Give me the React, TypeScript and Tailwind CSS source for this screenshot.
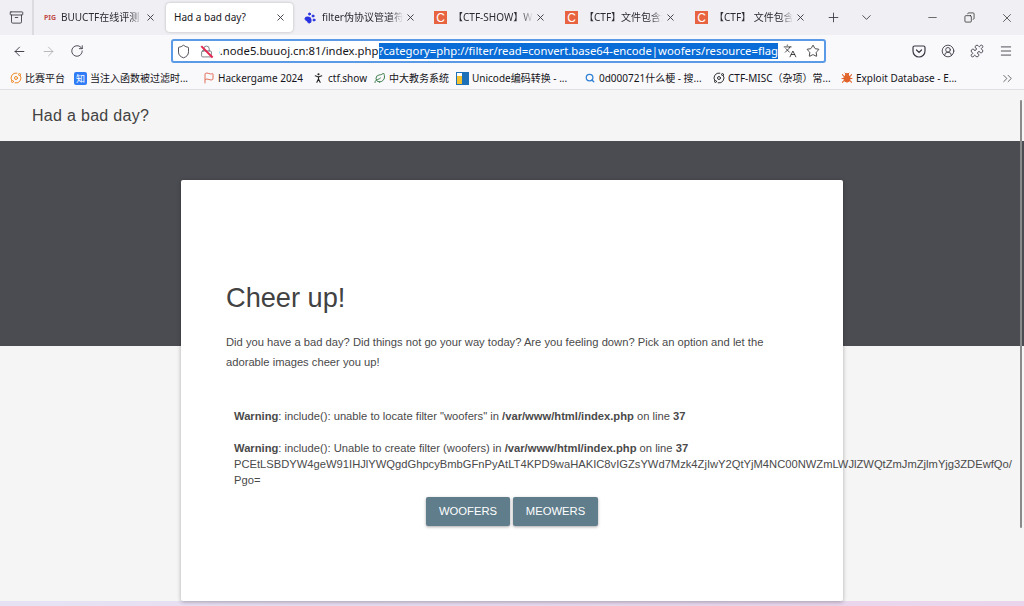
import React from "react";
import {
  ArrowLeft,
  ArrowRight,
  RotateCw,
  X,
  Plus,
  ChevronDown,
  Minus,
  Shield,
  Lock,
  Languages,
  Star,
  CircleUserRound,
  Puzzle,
  Menu,
  ChevronsRight,
  Search,
  PawPrint,
  Archive,
  Copy,
  Flag,
  PersonStanding,
  Leaf,
  Orbit,
  Bug,
} from "lucide-react";

const chromeFont = "font-['Noto_Sans','Noto_Sans_CJK_SC',sans-serif]";

const CFav = () => (
  <span className="flex h-[13px] w-[13px] shrink-0 items-center justify-center bg-[#e8633f] font-['Liberation_Sans',sans-serif] text-[12px] leading-none text-white">
    C
  </span>
);

const tabs = [
  {
    title: "BUUCTF在线评测",
    width: "w-[131px]",
    pad: "pl-[10px]",
    icon: <span className="w-[11px] shrink-0 text-[7px] font-bold leading-none text-[#c0504d]">PIG</span>,
  },
  {
    title: "filter伪协议管道符仪",
    width: "w-[128.5px]",
    pad: "pl-[8px]",
    icon: <PawPrint size={12} className="shrink-0 fill-[#2932e1] text-[#2932e1]" />,
  },
  { title: "【CTF-SHOW】WEB入门", width: "w-[130px]", pad: "pl-[9.5px]", icon: <CFav /> },
  { title: "【CTF】文件包含漏洞", width: "w-[130px]", pad: "pl-[10.5px]", icon: <CFav /> },
  { title: "【CTF】 文件包含漏洞", width: "w-[130px]", pad: "pl-[10.5px]", icon: <CFav /> },
];

const Tab = ({ tab }: { tab: (typeof tabs)[number] }) => (
  <div className={`flex h-[29px] shrink-0 items-center ${tab.width} ${tab.pad}`}>
    {tab.icon}
    <span className="ml-[6px] min-w-0 flex-1 overflow-hidden whitespace-nowrap text-[10px] text-[#2b2a33] [mask-image:linear-gradient(to_right,black_85%,transparent)]">
      {tab.title}
    </span>
    <X size={11} className="ml-[2px] mr-[9px] shrink-0 text-[#3a3944]" />
  </div>
);

const bookmarks = [
  {
    label: "比赛平台",
    width: "w-[65px]",
    icon: <Orbit size={12} className="text-[#f08a24]" />,
  },
  {
    label: "当注入函数被过滤时...",
    width: "w-[128px]",
    icon: (
      <span className="flex h-[13px] w-[13px] items-center justify-center rounded-[2px] bg-[#2f7cf6] text-[9px] leading-none text-white">
        知
      </span>
    ),
  },
  {
    label: "Hackergame 2024",
    width: "w-[110px]",
    icon: <Flag size={12} className="text-[#e2725b]" />,
  },
  {
    label: "ctf.show",
    width: "w-[61px]",
    icon: <PersonStanding size={14} className="text-[#222]" />,
  },
  {
    label: "中大教务系统",
    width: "w-[83px]",
    icon: <Leaf size={12} className="text-[#3f7f4f]" />,
  },
  {
    label: "Unicode编码转换 - ...",
    width: "w-[127px]",
    icon: (
      <span className="flex h-[13px] w-[13px] items-end border border-[#1d6fb8] bg-white">
        <span className="h-[8px] w-[5px] bg-[#f2c230]" />
        <span className="h-[11px] w-[6px] bg-[#1d6fb8]" />
      </span>
    ),
  },
  {
    label: "0d000721什么梗 - 搜...",
    width: "w-[129px]",
    icon: <Search size={10} strokeWidth={3} className="text-[#2e7fd6]" />,
  },
  {
    label: "CTF-MISC（杂项）常...",
    width: "w-[128px]",
    icon: <Orbit size={12} className="text-[#333]" />,
  },
  {
    label: "Exploit Database - E...",
    width: "w-[125px]",
    icon: <Bug size={12} className="fill-[#e2632a] text-[#e2632a]" />,
  },
];

export default function App() {
  return (
    <div className={`flex h-[606px] w-[1024px] flex-col overflow-hidden bg-[#f5f5f5] ${chromeFont}`}>
      {/* tab strip */}
      <div className="flex h-[35px] shrink-0 items-center bg-[#f0f0f4]">
        <div className="flex h-full w-[34px] shrink-0 items-center justify-center border-r-2 border-[#dcdce0]">
          <Archive size={15} strokeWidth={1.4} className="text-[#3a3944]" />
        </div>
        <Tab tab={tabs[0]} />
        <div className="ml-[1px] mr-[3px] flex h-[29px] w-[127px] shrink-0 items-center rounded-[4px] bg-white pl-[8px] shadow-[0_0_3px_rgba(0,0,0,0.25)]">
          <span className="flex-1 text-[10px] text-[#15141a]">Had a bad day?</span>
          <X size={11} className="mr-[7.5px] text-[#3a3944]" />
        </div>
        {tabs.slice(1).map((t) => (
          <Tab key={t.title} tab={t} />
        ))}
        <Plus size={15} strokeWidth={1.4} className="ml-[11px] shrink-0 text-[#3a3944]" />
        <ChevronDown size={15} strokeWidth={1.4} className="ml-[18px] shrink-0 text-[#3a3944]" />
        <Minus size={13} strokeWidth={1.2} className="ml-[52px] shrink-0 text-[#222]" />
        <Copy size={11} strokeWidth={1.6} className="ml-[25px] shrink-0 -scale-x-100 text-[#222]" />
        <X size={14} strokeWidth={1.2} className="ml-[25px] shrink-0 text-[#222]" />
      </div>

      {/* nav toolbar */}
      <div className="flex h-[32px] shrink-0 items-center bg-[#f9f9fb]">
        <ArrowLeft size={15} strokeWidth={1.5} className="ml-[12px] shrink-0 text-[#3a3944]" />
        <ArrowRight size={15} strokeWidth={1.5} className="ml-[14px] shrink-0 text-[#b4b4b9]" />
        <RotateCw size={14} strokeWidth={1.5} className="ml-[14px] shrink-0 text-[#3a3944]" />
        <div className="ml-[87px] flex h-[24px] w-[655px] shrink-0 items-center rounded-[3px] border-2 border-[#5b9ae6] bg-white">
          <Shield size={15} strokeWidth={1.4} className="ml-[3px] shrink-0 text-[#3a3944]" />
          <div className="relative ml-[9px] shrink-0">
            <Lock size={13} strokeWidth={1.4} className="text-[#5b5b66]" />
            <span className="absolute left-[6px] top-[-1px] h-[16px] w-[1.5px] -rotate-45 bg-[#e22850]" />
          </div>
          <div className="ml-[6px] flex w-[559px] shrink-0 justify-end overflow-hidden whitespace-nowrap text-[11.3px] leading-[16px] text-[#15141a]">
            <span>3.node5.buuoj.cn:81/index.php</span>
            <span className="bg-[#0a6cd6] text-white">?category=php://filter/read=convert.base64-encode|woofers/resource=flag</span>
          </div>
          <Languages size={14} strokeWidth={1.4} className="ml-[5px] shrink-0 text-[#222]" />
          <Star size={14} strokeWidth={1.4} className="ml-[9px] shrink-0 text-[#222]" />
        </div>
        <svg width="14" height="13" viewBox="0 0 14 13" fill="none" stroke="#3a3944" strokeWidth="1.2" className="ml-[86px] shrink-0">
          <path d="M2.5 1h9A1.5 1.5 0 0 1 13 2.5V6A6 6 0 0 1 1 6V2.5A1.5 1.5 0 0 1 2.5 1Z" />
          <path d="M4.5 5 7 7.5 9.5 5" strokeLinecap="round" />
        </svg>
        <CircleUserRound size={14} strokeWidth={1.5} className="ml-[15px] shrink-0 text-[#3a3944]" />
        <Puzzle size={14} strokeWidth={1.5} className="ml-[15px] shrink-0 text-[#3a3944]" />
        <Menu size={14} strokeWidth={1.5} className="ml-[15px] shrink-0 text-[#3a3944]" />
      </div>

      {/* bookmarks */}
      <div className="flex h-[23px] shrink-0 items-center border-b border-[#e0e0e4] bg-[#f9f9fb] pl-[9px]">
        {bookmarks.map((b) => (
          <div key={b.label} className={`flex shrink-0 items-center gap-[3px] overflow-hidden whitespace-nowrap text-[10px] text-[#15141a] ${b.width}`}>
            <span className="flex w-[13px] shrink-0 justify-center">{b.icon}</span>
            {b.label}
          </div>
        ))}
        <ChevronsRight size={15} strokeWidth={1.2} className="ml-[35px] shrink-0 text-[#3a3944]" />
      </div>

      {/* page */}
      <div className="relative flex min-h-0 flex-1 flex-col font-['Liberation_Sans',sans-serif]">
        <div className="flex h-[51px] shrink-0 items-center bg-[#f5f5f5] pl-[32px] text-[16px] tracking-[0.3px] text-[#424242]">
          Had a bad day?
        </div>
        <div className="h-[205px] shrink-0 bg-[#4a4c51]" />
        <div className="z-10 ml-[181px] -mt-[166px] h-[421px] w-[662px] shrink-0 rounded-[2px] bg-white px-[45px] pt-[101px] shadow-[0_1px_4px_rgba(0,0,0,0.3)]">
          <h1 className="text-[27.2px] leading-[34px] text-[#424242]">Cheer up!</h1>
          <p className="mt-[17px] text-[11.2px] leading-[20px] text-[#4a4a4a]">
            Did you have a bad day? Did things not go your way today? Are you feeling down? Pick an option and let the adorable images cheer you up!
          </p>
          <div className="ml-[8px] mt-[36px] whitespace-nowrap text-[11.2px] leading-[16px] text-[#4a4a4a]">
            <div>
              <b>Warning</b>: include(): unable to locate filter "woofers" in <b>/var/www/html/index.php</b> on line <b>37</b>
            </div>
            <div className="mt-[16px]">
              <b>Warning</b>: include(): Unable to create filter (woofers) in <b>/var/www/html/index.php</b> on line <b>37</b>
            </div>
            <div>PCEtLSBDYW4geW91IHJlYWQgdGhpcyBmbGFnPyAtLT4KPD9waHAKIC8vIGZsYWd7Mzk4ZjIwY2QtYjM4NC00NWZmLWJlZWQtZmJmZjlmYjg3ZDEwfQo/</div>
            <div>Pgo=</div>
          </div>
          <div className="mt-[9px] flex justify-center gap-[3px]">
            <button className="flex h-[29px] w-[84px] items-center justify-center rounded-[2px] bg-[#607d8b] text-[11.25px] text-white shadow-[0_1px_3px_rgba(0,0,0,0.35)]">
              WOOFERS
            </button>
            <button className="flex h-[29px] w-[85px] items-center justify-center rounded-[2px] bg-[#607d8b] text-[11.25px] text-white shadow-[0_1px_3px_rgba(0,0,0,0.35)]">
              MEOWERS
            </button>
          </div>
        </div>
        <div className="mt-auto h-[5px] shrink-0 bg-gradient-to-r from-[#e6e2f4] to-[#ead4ec]" />
        <div className="absolute right-[2px] top-[10px] h-[428px] w-[2px] rounded-full bg-[#8a8a8a]" />
      </div>
    </div>
  );
}
